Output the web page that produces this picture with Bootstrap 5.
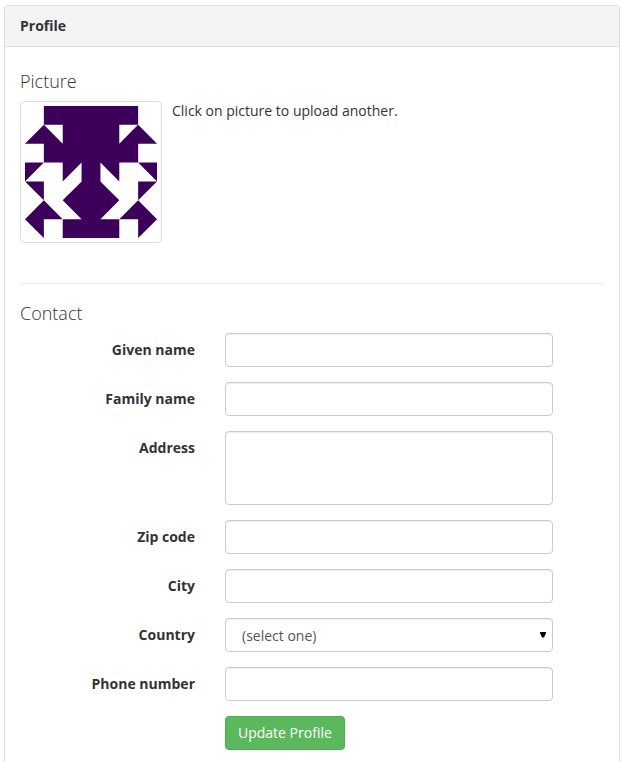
<!DOCTYPE html>
<html lang="en">
<head>
<meta charset="utf-8">
<meta name="viewport" content="width=device-width, initial-scale=1">
<title>Profile</title>
<link rel="stylesheet" href="https://cdn.jsdelivr.net/npm/bootstrap@5.3.0/dist/css/bootstrap.min.css">
<style>
  body { font-family: "Open Sans", sans-serif; font-size: 14px; line-height: 20px; color: #333; background: #fff; padding-top: 5px; }
  .profile-card { margin: 0 2px 0 4px; height: 757px; border: 1px solid #ddd; border-bottom: 0; border-radius: 4px 4px 0 0; color: #333; }
  .profile-head { background: #f4f4f4; border-bottom: 1px solid #ddd; padding: 10px 15px; color: #333; }
  .profile-body { padding: 15px 15px 0; }
  .section-title { font-size: 18px; font-weight: 300; line-height: 18px; margin: 10px 0 11px; }
  .avatar-link { width: 142px; height: 142px; padding: 4px; border: 1px solid #ddd; border-radius: 4px; }
  .avatar-link svg { width: 132px; height: 132px; fill: #3d005a; }
  .avatar-note { margin-left: 10px; }
  .divider { margin: 40px 0 20px; border-top: 1px solid #eee; opacity: 1; }
  .field { margin-bottom: 15px; }
  .field-label { width: 175px; margin-right: 30px; padding-top: 7px; }
  .field-box { width: 328px; }
  .field-box .form-control, .field-box .form-select { height: 34px; padding: 6px 12px; font-size: 14px; line-height: 20px; color: #555; border: 1px solid #ccc; border-radius: 4px; box-shadow: inset 0 1px 1px rgba(0,0,0,.075); }
  .field-box textarea.form-control { height: 74px; min-height: 0; resize: none; display: block; }
  .field-box .form-select { padding: 7px 24px 5px 16px;
    background-image: url("data:image/svg+xml,%3Csvg xmlns='http://www.w3.org/2000/svg' viewBox='0 0 6 6'%3E%3Cpath d='M0 0h6v1L4 5.6H2L0 1z'/%3E%3C/svg%3E");
    background-size: 6px 6px; background-position: right 6px top 13px; }
  .btn-update { margin-left: 205px; height: 34px; padding: 6px 12px; font-size: 14px; line-height: 20px; border-radius: 4px;
    --bs-btn-bg: #5cb85c; --bs-btn-border-color: #4cae4c; --bs-btn-hover-bg: #449d44; }
</style>
<script src="https://cdn.jsdelivr.net/npm/bootstrap@5.3.0/dist/js/bootstrap.bundle.min.js"></script>
</head>
<body>
<div class="card profile-card">
  <div class="card-header profile-head fw-bold">Profile</div>
  <div class="card-body profile-body">
    <h4 class="section-title">Picture</h4>
    <div class="d-flex">
      <a href="#" class="avatar-link d-block flex-shrink-0" aria-label="Upload picture">
        <svg class="d-block" viewBox="0 0 7 7">
          <path d="M1 0H6V1L7 2H6V3H7V4L6 3H5V4L4 3V4L5 5L4 6H5V7H2V6H3L2 5L3 4V3L2 4V3H1V2H0L1 1Z M0 3H1L0 4Z"/>
          <path fill="#fff" d="M1 1H2V2Z M6 1H5V2Z"/>
          <path d="M0 4H1V5Z M7 4H6V5Z M1 5L2 6H1V7L0 6Z M6 5L7 6L6 7V6H5Z"/>
        </svg>
      </a>
      <span class="avatar-note">Click on picture to upload another.</span>
    </div>
    <hr class="divider">
    <h4 class="section-title">Contact</h4>
    <form>
      <div class="d-flex field"><label class="field-label text-end fw-bold" for="given">Given name</label><div class="field-box"><input class="form-control" id="given" type="text"></div></div>
      <div class="d-flex field"><label class="field-label text-end fw-bold" for="family">Family name</label><div class="field-box"><input class="form-control" id="family" type="text"></div></div>
      <div class="d-flex field"><label class="field-label text-end fw-bold" for="address">Address</label><div class="field-box"><textarea class="form-control" id="address"></textarea></div></div>
      <div class="d-flex field"><label class="field-label text-end fw-bold" for="zip">Zip code</label><div class="field-box"><input class="form-control" id="zip" type="text"></div></div>
      <div class="d-flex field"><label class="field-label text-end fw-bold" for="city">City</label><div class="field-box"><input class="form-control" id="city" type="text"></div></div>
      <div class="d-flex field"><label class="field-label text-end fw-bold" for="country">Country</label><div class="field-box"><select class="form-select" id="country"><option>(select one)</option></select></div></div>
      <div class="d-flex field"><label class="field-label text-end fw-bold" for="phone">Phone number</label><div class="field-box"><input class="form-control" id="phone" type="text"></div></div>
      <button type="button" class="btn btn-success btn-update">Update Profile</button>
    </form>
  </div>
</div>
</body>
</html>
